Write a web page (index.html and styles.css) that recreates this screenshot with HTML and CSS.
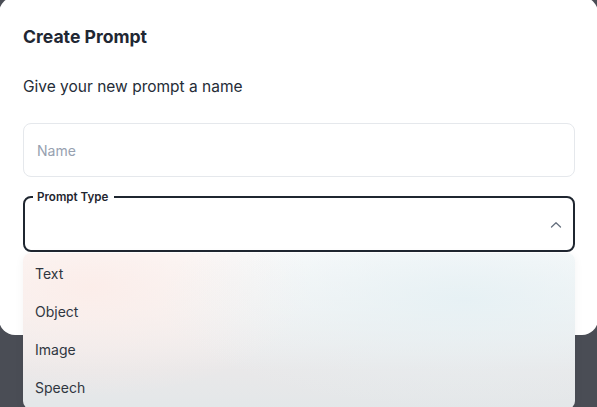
FILE: index.html
```html
<!DOCTYPE html>
<html lang="en">
<head>
<meta charset="utf-8">
<title>Create Prompt</title>
<link rel="stylesheet" href="styles.css">
</head>
<body>
<div class="modal">
  <h2 class="modal-title">Create Prompt</h2>
  <p class="modal-text">Give your new prompt a name</p>
  <div class="input">Name</div>
  <fieldset class="select">
    <legend>Prompt Type</legend>
    <div class="select-body">
      <svg class="chevron" width="12" height="8" viewBox="0 0 12 8" aria-hidden="true">
        <path d="M1.5 6 L6 1.8 L10.5 6" fill="none" stroke="#66707e" stroke-width="1.3" stroke-linecap="round" stroke-linejoin="round"/>
      </svg>
    </div>
  </fieldset>
</div>
<ul class="menu">
  <li>Text</li>
  <li>Object</li>
  <li>Image</li>
  <li>Speech</li>
</ul>
</body>
</html>
```
FILE: styles.css
```css
html, body {
  margin: 0;
  height: 100%;
}
body {
  background: #4a4d55;
  font-family: Inter, "Noto Sans", "Liberation Sans", sans-serif;
  color: #1f2733;
  overflow: hidden;
  position: relative;
}
.modal {
  position: absolute;
  left: -1px;
  top: -3px;
  width: 599px;
  height: 338px;
  box-sizing: border-box;
  background: #ffffff;
  border-radius: 16px;
  padding: 28px 23px 0 24px;
  display: flex;
  flex-direction: column;
}
.modal-title {
  margin: 0;
  font-size: 17.6px;
  line-height: 24px;
  font-weight: 700;
  color: #1f2733;
}
.modal-text {
  margin: 26px 0 0;
  font-size: 15.5px;
  line-height: 24px;
  color: #252c37;
}
.input {
  margin-top: 24px;
  height: 54px;
  box-sizing: border-box;
  border: 1px solid #e5e8ec;
  border-radius: 8px;
  padding: 0 13px;
  display: flex;
  align-items: center;
  font-size: 14px;
  color: #97a1b0;
}
.select {
  margin: 13px 0 0;
  height: 62px;
  box-sizing: border-box;
  border: 2px solid #1f2630;
  border-radius: 8px;
  padding: 0 11px 0 8px;
  min-width: 0;
}
.select legend {
  font-size: 11.6px;
  line-height: 14px;
  font-weight: 600;
  color: #1f2630;
  padding: 0 6px 0 4px;
}
.select-body {
  height: 46px;
  box-sizing: border-box;
  padding-bottom: 4px;
  display: flex;
  justify-content: flex-end;
  align-items: center;
}
.chevron {
  display: block;
}
.menu {
  position: absolute;
  left: 23px;
  top: 253px;
  width: 552px;
  height: 156px;
  margin: 0;
  padding: 1px 0 0;
  list-style: none;
  box-sizing: border-box;
  border-radius: 8px;
  box-shadow: 0 2px 10px rgba(0, 0, 0, 0.05);
  background:
    radial-gradient(ellipse 55% 70% at 80% 30%, rgba(228, 240, 244, 0.85), rgba(228, 240, 244, 0)),
    radial-gradient(ellipse 40% 70% at 12% 22%, rgba(252, 236, 232, 0.9), rgba(252, 236, 232, 0)),
    linear-gradient(180deg, #fbfbfb 0%, #f5f5f5 35%, #e9e8e9 75%, #e3e7e9 100%);
}
.menu li {
  height: 38px;
  padding: 0 12px;
  display: flex;
  align-items: center;
  font-size: 14px;
  color: #2f3640;
}
```
